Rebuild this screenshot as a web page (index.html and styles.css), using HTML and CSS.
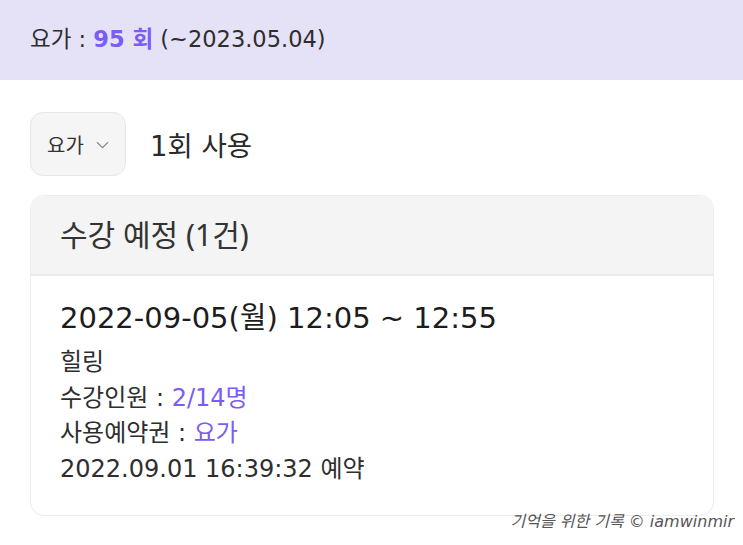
FILE: index.html
```html
<!DOCTYPE html>
<html lang="ko">
<head>
  <meta charset="UTF-8">
  <meta name="viewport" content="width=device-width, initial-scale=1.0">
  <title>수강 예정</title>
  <link rel="stylesheet" href="styles.css">
</head>
<body>
  <div class="banner">
    요가 : <span class="count">95 회</span> (~2023.05.04)
  </div>

  <div class="pick-row">
    <div class="select">
      요가
      <svg class="chev" width="13" height="8" viewBox="0 0 13 8"><path d="M1 1.2 L6.5 6.6 L12 1.2" fill="none" stroke="#8a8a8a" stroke-width="1.2"/></svg>
    </div>
    <span class="used">1회 사용</span>
  </div>

  <div class="card">
    <div class="card-head">수강 예정 (1건)</div>
    <div class="card-body">
      <div class="when">2022-09-05(월) 12:05 ~ 12:55</div>
      <div class="line">힐링</div>
      <div class="line">수강인원 : <span class="hl">2/14명</span></div>
      <div class="line">사용예약권 : <span class="hl">요가</span></div>
      <div class="line">2022.09.01 16:39:32 예약</div>
    </div>
  </div>

  <div class="mark">기억을 위한 기록 © iamwinmir</div>
</body>
</html>
```

FILE: styles.css
```css
body {
  margin: 0;
  font-family: "DejaVu Sans", "Noto Sans CJK KR", sans-serif;
  color: #222;
  background: #fff;
}
.banner {
  background: #e5e1f7;
  height: 80px;
  box-sizing: border-box;
  padding: 21px 0 0 30px;
  font-size: 22.5px;
  color: #2e2e2e;
}
.count {
  color: #7b5cf6;
  font-weight: bold;
}
.pick-row {
  display: flex;
  align-items: center;
  margin: 32px 0 0 30px;
}
.select {
  width: 96px;
  height: 64px;
  box-sizing: border-box;
  background: #f5f5f5;
  border: 1px solid #e6e6e6;
  border-radius: 13px;
  display: flex;
  align-items: center;
  justify-content: center;
  gap: 12px;
  font-size: 20px;
  color: #333;
}
.chev {
  margin-top: 2px;
}
.used {
  margin-left: 24px;
  font-size: 27.5px;
  color: #2a2a2a;
}
.card {
  margin: 19px 29px 0 30px;
  border: 1px solid #ececec;
  border-radius: 14px;
  overflow: hidden;
}
.card-head {
  background: #f4f4f4;
  height: 80px;
  box-sizing: border-box;
  border-bottom: 2px solid #eaeaea;
  padding: 15px 0 0 29px;
  font-family: "Noto Sans", "Noto Sans CJK KR", sans-serif;
  font-size: 30px;
  color: #333;
}
.card-body {
  padding: 18px 29px 28px;
}
.when {
  font-size: 29px;
  color: #1c1c1c;
  margin-bottom: 9px;
}
.line {
  font-size: 24px;
  line-height: 35.5px;
  color: #2e2e2e;
}
.hl {
  color: #7b5cf6;
}
.mark {
  text-align: right;
  padding: 0 9px 0 0;
  line-height: 12px;
  font-size: 16px;
  font-style: italic;
  color: #555;
}
```
